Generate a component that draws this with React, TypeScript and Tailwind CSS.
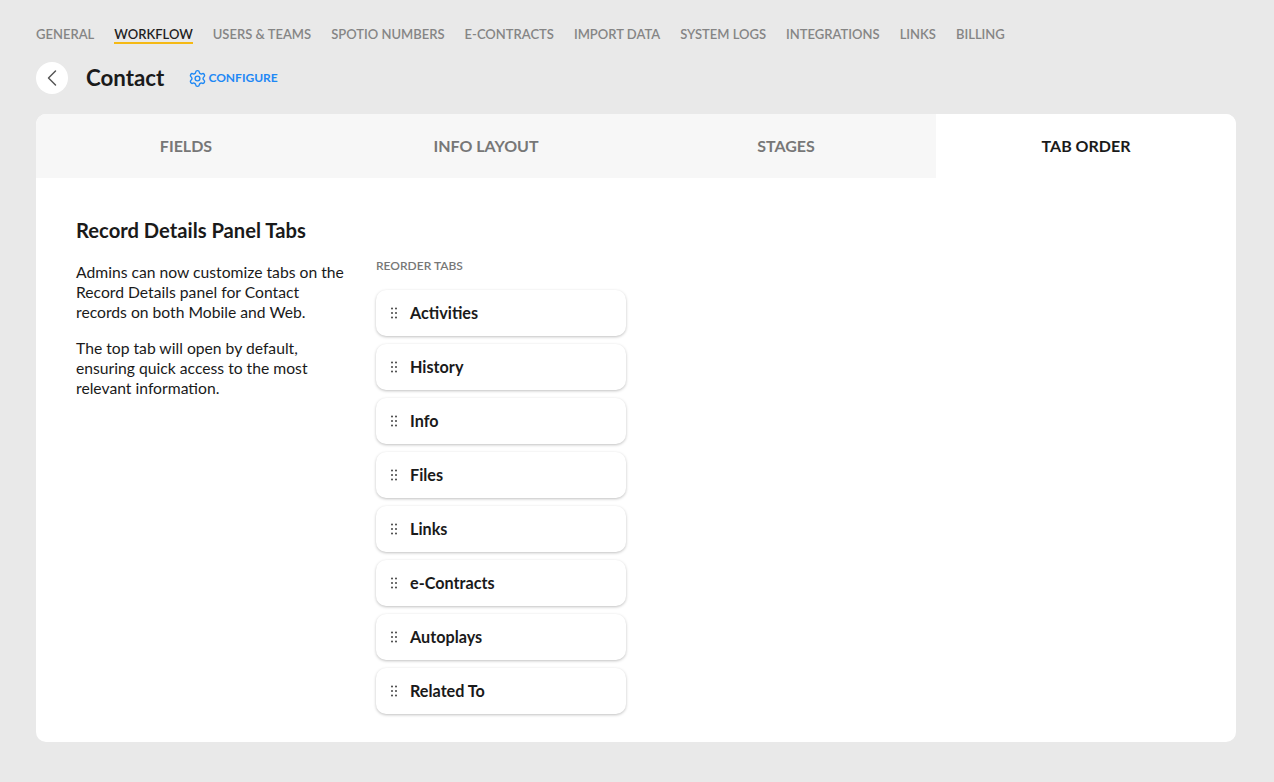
import React from 'react';
import { ChevronLeft, Settings } from 'lucide-react';

const navItems = ['General', 'Workflow', 'Users & Teams', 'Spotio Numbers', 'E-Contracts', 'Import Data', 'System Logs', 'Integrations', 'Links', 'Billing'];
const cardTabs = ['Fields', 'Info Layout', 'Stages', 'Tab Order'];
const panelTabs = ['Activities', 'History', 'Info', 'Files', 'Links', 'e-Contracts', 'Autoplays', 'Related To'];

function DragHandle() {
  return (
    <svg width="8" height="12" viewBox="0 0 8 12" className="text-[#444]" fill="currentColor">
      <circle cx="2" cy="1.5" r="1" />
      <circle cx="6" cy="1.5" r="1" />
      <circle cx="2" cy="6" r="1" />
      <circle cx="6" cy="6" r="1" />
      <circle cx="2" cy="10.5" r="1" />
      <circle cx="6" cy="10.5" r="1" />
    </svg>
  );
}

export default function App() {
  return (
    <div className="min-h-[782px] bg-[#e9e9e9] px-9 pt-[24px] font-['Lato',sans-serif] text-[#1a1a1a]">
      <nav className="flex h-[20px] gap-5">
        {navItems.map((item) => (
          <span
            key={item}
            className={
              item === 'Workflow'
                ? 'h-[20px] border-b-2 border-[#f5b914] text-[13px] leading-[20px] font-semibold uppercase text-[#1f1f1f]'
                : 'text-[13px] leading-[20px] font-semibold uppercase text-[#858585]'
            }
          >
            {item}
          </span>
        ))}
      </nav>

      <div className="mt-[18px] flex h-[32px] items-center">
        <div className="flex h-8 w-8 items-center justify-center rounded-full bg-white">
          <ChevronLeft size={28} strokeWidth={1.25} className="text-[#555]" />
        </div>
        <h1 className="ml-[18px] text-[22.3px] leading-8 font-bold text-[#1a1a1a]">Contact</h1>
        <div className="ml-[24px] flex items-center gap-[1px] text-[#1e88f5]">
          <Settings size={19} strokeWidth={1.75} />
          <span className="text-[12px] leading-4 font-bold uppercase">Configure</span>
        </div>
      </div>

      <div className="mt-[20px] h-[628px] w-[1200px] overflow-hidden rounded-[10px] bg-white">
        <div className="flex h-16">
          {cardTabs.map((tab) => (
            <div
              key={tab}
              className={
                tab === 'Tab Order'
                  ? 'flex w-[300px] items-center justify-center bg-white text-[16px] font-bold uppercase text-[#1a1a1a]'
                  : 'flex w-[300px] items-center justify-center bg-[#f7f7f7] text-[16px] font-bold uppercase text-[#777]'
              }
            >
              {tab}
            </div>
          ))}
        </div>

        <div className="px-10 pt-[38px]">
          <h2 className="text-[20.2px] leading-[28px] font-bold text-[#1a1a1a]">Record Details Panel Tabs</h2>
          <div className="flex">
            <div className="mt-[18px] w-[300px] pr-[30px] text-[15.7px] leading-[20px]">
              <p>Admins can now customize tabs on the Record Details panel for Contact records on both Mobile and Web.</p>
              <p className="mt-[16px]">The top tab will open by default, ensuring quick access to the most relevant information.</p>
            </div>
            <div className="mt-[14px] w-[250px]">
              <div className="text-[12px] leading-4 font-semibold uppercase text-[#777]">Reorder Tabs</div>
              <div className="mt-[16px] flex flex-col gap-2">
                {panelTabs.map((tab) => (
                  <div
                    key={tab}
                    className="flex h-[46px] items-center gap-[12px] rounded-[10px] bg-white pl-[14px] shadow-[0_1px_3px_rgba(0,0,0,0.25)]"
                  >
                    <DragHandle />
                    <span className="text-[16.2px] font-bold text-[#1a1a1a]">{tab}</span>
                  </div>
                ))}
              </div>
            </div>
          </div>
        </div>
      </div>
    </div>
  );
}
